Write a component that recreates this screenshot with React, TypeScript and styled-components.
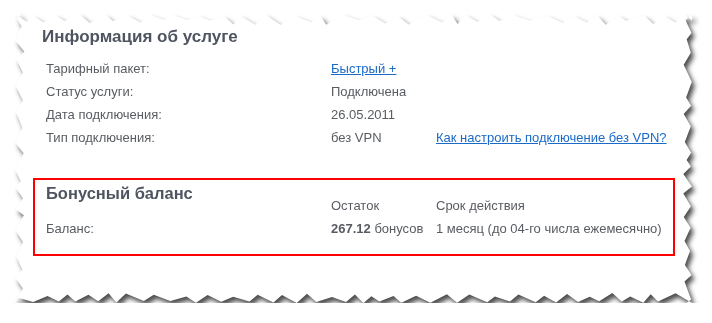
import styled, { createGlobalStyle } from 'styled-components';

const PAPER_W = 677;
const PAPER_H = 289;

// deterministic "random" so the torn edge is the same on every load
function makeRandom(seed: number) {
  let s = seed;
  return () => {
    s = (s * 16807) % 2147483647;
    return (s - 1) / 2147483646;
  };
}

function tornEdge(len: number, depth: number, seed: number) {
  const rnd = makeRandom(seed);
  const pts: [number, number][] = [];
  let pos = 0;
  let tip = true;
  while (pos < len) {
    const d = tip ? rnd() * 2 : depth * (0.55 + rnd() * 0.45);
    pts.push([pos, d]);
    pos += 6 + rnd() * 12;
    tip = !tip;
  }
  pts.push([len, depth * 0.6]);
  return pts;
}

function tornPolygon() {
  const top = tornEdge(PAPER_W, 11, 11).map(([x, d]) => `${x.toFixed(1)}px ${d.toFixed(1)}px`);
  const right = tornEdge(PAPER_H, 9, 23).map(
    ([y, d]) => `${(PAPER_W - d).toFixed(1)}px ${y.toFixed(1)}px`
  );
  const bottom = tornEdge(PAPER_W, 10, 37)
    .map(([x, d]) => `${(PAPER_W - x).toFixed(1)}px ${(PAPER_H - d).toFixed(1)}px`);
  const left = tornEdge(PAPER_H, 10, 51).map(
    ([y, d]) => `${d.toFixed(1)}px ${(PAPER_H - y).toFixed(1)}px`
  );
  return `polygon(${[...top, ...right, ...bottom, ...left].join(', ')})`;
}

const PAPER_CLIP = tornPolygon();

const serviceRows = [
  { label: 'Тарифный пакет:', value: 'Быстрый +', link: true },
  { label: 'Статус услуги:', value: 'Подключена' },
  { label: 'Дата подключения:', value: '26.05.2011' },
  { label: 'Тип подключения:', value: 'без VPN', extra: 'Как настроить подключение без VPN?' },
];

function App() {
  return (
    <>
      <GlobalStyle />
      <PaperShadow>
        <Paper>
          <Section>
            <Title>Информация об услуге</Title>
            <InfoGrid>
              {serviceRows.map((row) => (
                <Row key={row.label}>
                  <Cell>{row.label}</Cell>
                  <Cell>{row.link ? <Link href="#">{row.value}</Link> : row.value}</Cell>
                  <Cell>{row.extra && <Link href="#">{row.extra}</Link>}</Cell>
                </Row>
              ))}
            </InfoGrid>
          </Section>

          <BonusBox>
            <BonusGrid>
              <BonusTitle>Бонусный баланс</BonusTitle>
              <ColumnHead>Остаток</ColumnHead>
              <ColumnHead>Срок действия</ColumnHead>
              <Cell>Баланс:</Cell>
              <Cell>
                <Strong>267.12</Strong> бонусов
              </Cell>
              <Cell>1 месяц (до 04-го числа ежемесячно)</Cell>
            </BonusGrid>
          </BonusBox>
        </Paper>
      </PaperShadow>
    </>
  );
}

const GlobalStyle = createGlobalStyle`
  body {
    margin: 0;
    background: #ffffff;
    font-family: "Liberation Sans", Arial, sans-serif;
  }
`;

const PaperShadow = styled.div`
  width: ${PAPER_W}px;
  margin: 14px 0 0 15px;
  filter: drop-shadow(3px 4px 2.5px rgba(0, 0, 0, 0.7));
`;

const Paper = styled.div`
  box-sizing: border-box;
  width: ${PAPER_W}px;
  height: ${PAPER_H}px;
  padding: 13px 17px 0 18px;

  background: #ffffff;
  clip-path: ${PAPER_CLIP};
`;

const Section = styled.div`
  padding-left: 9px;
`;

const Title = styled.h3`
  margin: 0 0 10px;

  font-size: 17px;
  font-weight: 700;
  line-height: 20px;
  color: #4f5560;
`;

const InfoGrid = styled.div`
  display: grid;
  grid-template-columns: 285px 105px auto;
  padding-left: 4px;
`;

const Row = styled.div`
  display: contents;
`;

const Cell = styled.div`
  font-size: 13px;
  line-height: 23px;
  color: #585c62;
  white-space: nowrap;
`;

const Link = styled.a`
  color: #1a6ac8;
  text-decoration: underline;
`;

const BonusBox = styled.div`
  margin-top: 29px;
  padding: 3px 11px 14px;

  border: 2px solid #ff0000;
`;

const BonusGrid = styled.div`
  display: grid;
  grid-template-columns: 285px 105px auto;
  grid-template-rows: 34px 23px;
`;

const BonusTitle = styled.h3`
  align-self: start;
  margin: 0;

  font-size: 16.5px;
  font-weight: 700;
  line-height: 20px;
  color: #4f5560;
  white-space: nowrap;
`;

const ColumnHead = styled(Cell)`
  align-self: end;
`;

const Strong = styled.b`
  font-weight: 700;
`;

export default App;
